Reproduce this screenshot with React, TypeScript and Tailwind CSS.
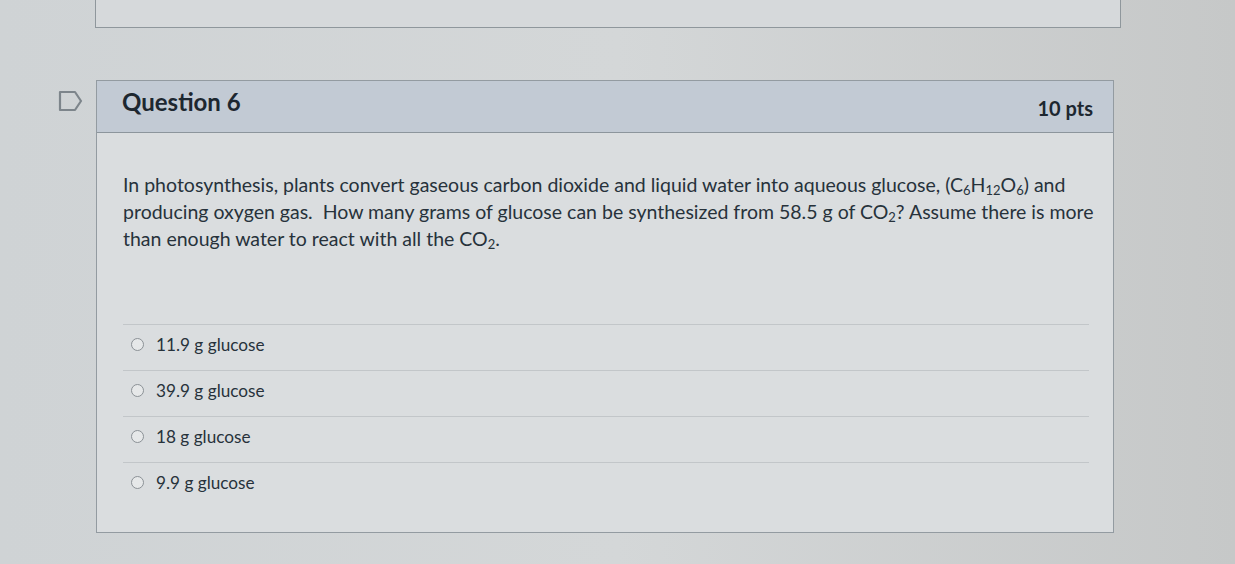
import React from 'react';

const answers = ['11.9 g glucose', '39.9 g glucose', '18 g glucose', '9.9 g glucose'];

const FlagIcon = () => (
    <svg width="26" height="22" viewBox="0 0 26 22" fill="none">
        <path d="M2 2 H17 L23 11 L17 20 H2 Z" stroke="#7d858b" strokeWidth="2.2" strokeLinejoin="round" />
    </svg>
);

const App = () => {
    return (
        <div className="w-[1235px] h-[564px] overflow-hidden bg-gradient-to-r from-[#cfd3d5] via-[#d4d7d8] to-[#c6c8c8] font-['Lato','Liberation_Sans',sans-serif] text-[#222c35]">
            {/* previous question, cut off at the top */}
            <div className="ml-[95px] w-[1026px] h-[28px] border-l border-b border-r border-[#8f979c] bg-[#d6d9db]" />

            <div className="flex mt-[52px]">
                <div className="w-[96px] flex justify-end pr-[12px] pt-[10px]">
                    <FlagIcon />
                </div>
                <div className="w-[1018px] border border-[#939ba1] bg-[#dadddf]">
                    {/* header */}
                    <div className="h-[52px] flex justify-between bg-[#c2cad4] border-b border-[#8c959c]">
                        <h2 className="pl-[25px] pt-[6px] text-[24px] font-bold leading-[30px] text-[#1d2730]">Question 6</h2>
                        <div className="pr-[20px] pt-[15px] text-[20px] font-bold leading-[25px] text-[#1d2730]">10 pts</div>
                    </div>

                    {/* body */}
                    <div className="px-[26px] pt-[38px]">
                        <p className="text-[19.5px] leading-[27px] whitespace-nowrap text-[#27323b]">
                            In photosynthesis, plants convert gaseous carbon dioxide and liquid water into aqueous glucose, (C<sub className="text-[13px]">6</sub>H<sub className="text-[13px]">12</sub>O<sub className="text-[13px]">6</sub>) and
                            <br />
                            producing oxygen gas.&nbsp; How many grams of glucose can be synthesized from 58.5 g of CO<sub className="text-[13px]">2</sub>? Assume there is more
                            <br />
                            than enough water to react with all the CO<sub className="text-[13px]">2</sub>.
                        </p>

                        <div className="mt-[72px] mr-[-2px] pb-[24px]">
                            {answers.map((answer, index) => (
                                <div
                                    key={index}
                                    className="h-[46px] flex items-center gap-[12px] pl-[8px] pb-[6px] border-t border-[#c2c6c9]"
                                >
                                    <span className="w-[13px] h-[13px] rounded-full border-[1.5px] border-[#8b9196] bg-[#e6e8e9]" />
                                    <span className="text-[17.2px] leading-[22px] text-[#27323b]">{answer}</span>
                                </div>
                            ))}
                        </div>
                    </div>
                </div>
            </div>
        </div>
    );
};

export default App;
